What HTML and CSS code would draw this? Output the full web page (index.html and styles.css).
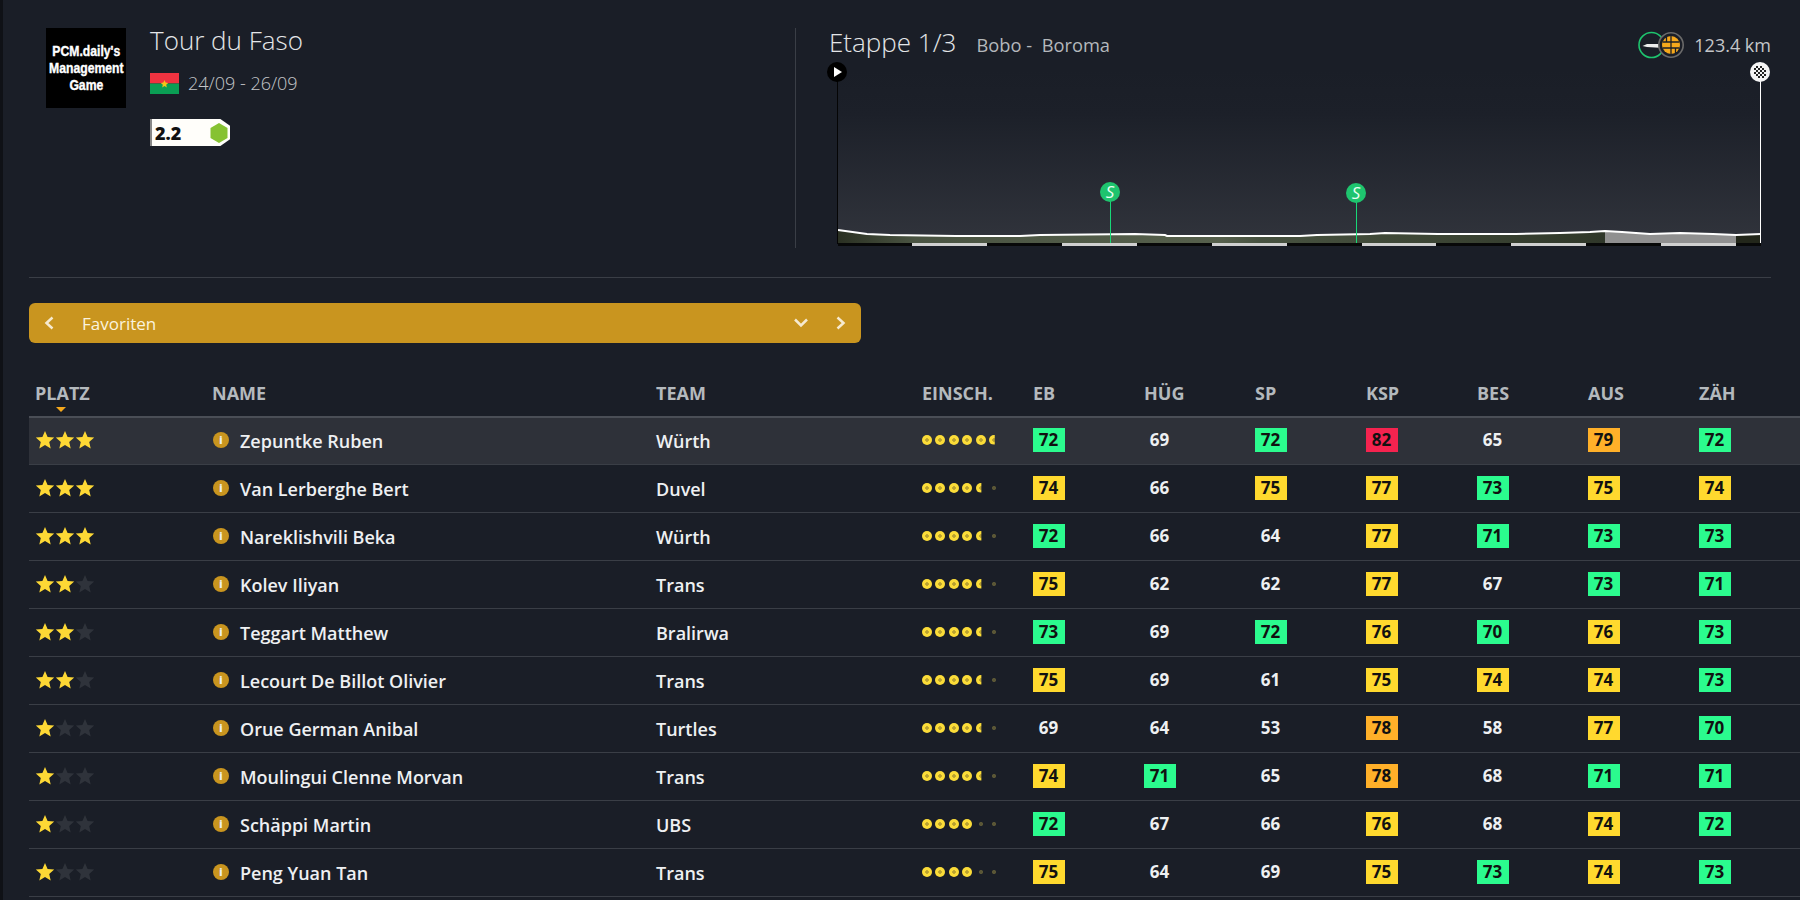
FILE: index.html
```html
<!DOCTYPE html>
<html lang="de">
  <head>
    <meta charset="UTF-8" />
    <title>Tour du Faso</title>
    <link rel="stylesheet" href="styles.css">
  </head>
  <body>
    <svg class="defs" width="0" height="0">
      <symbol id="star" viewBox="0 0 20 20"><polygon points="10,1 12.6,7 19.2,7.6 14.2,12 15.7,18.5 10,15.1 4.3,18.5 5.8,12 0.8,7.6 7.4,7" /></symbol>
    </svg>
    <div class="head">
      <div class="race">
        <div class="logo"><span class="logo-text">PCM.daily's<br>Management<br>Game</span></div>
        <div class="race-info">
          <h1 class="race-title">Tour du Faso</h1>
          <div class="race-date">
            <svg class="flag" width="29" height="21" viewBox="0 0 29 21">
              <rect width="29" height="10.5" fill="#ef3340" />
              <rect y="10.5" width="29" height="10.5" fill="#0a9e54" />
              <polygon points="14.5,7 15.6,9.6 18.2,10 16.2,11.8 16.8,14.4 14.5,13 12.2,14.4 12.8,11.8 10.8,10 13.4,9.6" fill="#f5c518" />
            </svg>
            <span>24/09 - 26/09</span>
          </div>
          <div class="cat">
            <span class="cat-num">2.2</span>
            <svg width="20" height="20" viewBox="0 0 20 20"><polygon points="10,0 18.5,5 18.5,15 10,20 1.5,15 1.5,5" fill="#86c232" /></svg>
          </div>
        </div>
      </div>
      <div class="stage">
        <div class="stage-top">
          <div class="stage-name">
            <span class="stage-num">Etappe 1/3</span>
            <span class="stage-route">Bobo -&nbsp; Boroma</span>
          </div>
          <div class="stage-len">
            <svg width="46" height="28" viewBox="0 0 46 28">
              <circle cx="13.5" cy="14" r="12.5" fill="none" stroke="#1ec46e" stroke-width="1.6" />
              <path d="M4.5 15 L9 13 H25 V17 L9 16 Z" fill="#eee" />
              <circle cx="33" cy="14" r="12.2" fill="#1a1e27" stroke="#6a6a6a" stroke-width="1.6" />
              <circle cx="33" cy="14" r="9" fill="#f5a81c" />
              <path d="M33 5 V23 M24.5 11 H41.5 M24.5 17 H41.5 M28.5 5.5 V11 M37.5 17 V22.5" stroke="#1a1e27" stroke-width="1.3" />
            </svg>
            <span>123.4 km</span>
          </div>
        </div>
        <svg class="profile" width="944" height="190" viewBox="826 60 944 190">
          <defs>
            <linearGradient id="sky" x1="0" y1="0" x2="0" y2="1">
              <stop offset="0" stop-color="#1a1e27" />
              <stop offset="0.25" stop-color="#1c2029" />
              <stop offset="1" stop-color="#31343c" />
            </linearGradient>
            <linearGradient id="land" x1="0" y1="0" x2="1" y2="0">
              <stop offset="0" stop-color="#2a3022" />
              <stop offset="0.1" stop-color="#4a5442" />
              <stop offset="0.5" stop-color="#56604c" />
              <stop offset="0.55" stop-color="#475240" />
              <stop offset="0.75" stop-color="#3e4736" />
              <stop offset="1" stop-color="#2f3729" />
            </linearGradient>
          </defs>
          <rect x="838" y="70" width="923" height="175" fill="url(#sky)" />
          <polygon fill="url(#land)" points="838,230 867,234 890,235 956,236 1020,236 1040,235 1135,234 1165,235 1167,236 1300,236 1317,235 1370,234 1385,233 1438,234 1516,234 1560,233 1590,232 1605,231 1605,243 838,243" />
          <polygon fill="#909090" points="1605,231 1622,232 1650,234 1680,233 1713,234 1736,235 1736,243 1605,243" />
          <polygon fill="#22261a" points="1736,235 1761,234 1761,243 1736,243" />
          <polyline class="ridge" points="838,230 867,234 890,235 956,236 1020,236 1040,235 1135,234 1165,235 1167,236 1300,236 1317,235 1370,234 1385,233 1438,234 1516,234 1560,233 1590,232 1605,231 1622,232 1650,234 1680,233 1713,234 1736,235 1761,234" />
          <rect x="838" y="243" width="923" height="3" fill="#070808" />
          <path class="km" d="M912 244.5H987M1062 244.5H1137M1212 244.5H1287M1362 244.5H1436M1511 244.5H1586M1661 244.5H1736" />
          <line x1="837.5" y1="72" x2="837.5" y2="244" stroke="#050505" />
          <circle cx="837" cy="72" r="10" fill="#000" />
          <polygon points="834,67 842,72 834,77" fill="#fff" />
          <line x1="1760.5" y1="72" x2="1760.5" y2="243" stroke="#fff" />
          <circle cx="1760" cy="72" r="10" fill="#f4f4f4" />
          <g fill="#222">
            <rect x="1756" y="66" width="2" height="2" /><rect x="1760" y="66" width="2" height="2" />
            <rect x="1754" y="68" width="2" height="2" /><rect x="1758" y="68" width="2" height="2" /><rect x="1762" y="68" width="2" height="2" />
            <rect x="1756" y="70" width="2" height="2" /><rect x="1760" y="70" width="2" height="2" /><rect x="1764" y="70" width="2" height="2" />
            <rect x="1754" y="72" width="2" height="2" /><rect x="1758" y="72" width="2" height="2" /><rect x="1762" y="72" width="2" height="2" />
            <rect x="1756" y="74" width="2" height="2" /><rect x="1760" y="74" width="2" height="2" /><rect x="1764" y="74" width="2" height="2" />
            <rect x="1758" y="76" width="2" height="2" /><rect x="1762" y="76" width="2" height="2" />
          </g>
          <line x1="1110.5" y1="192" x2="1110.5" y2="243" stroke="#18d878" />
          <circle cx="1110" cy="192" r="10" fill="#1ec46e" />
          <text class="pin-text" x="1110" y="198">S</text>
          <line x1="1356.5" y1="193" x2="1356.5" y2="243" stroke="#18d878" />
          <circle cx="1356" cy="193" r="10" fill="#1ec46e" />
          <text class="pin-text" x="1356" y="199">S</text>
        </svg>
      </div>
    </div>

    <div class="filter">
      <svg class="chev" width="12" height="14" viewBox="0 0 12 14"><path d="M9.5 1.5 L3.5 7 L9.5 12.5" /></svg>
      <span class="filter-name">Favoriten</span>
      <svg class="chev chev-down" width="14" height="12" viewBox="0 0 14 12"><path d="M1 2.5 L7 8.5 L13 2.5" /></svg>
      <svg class="chev chev-next" width="12" height="14" viewBox="0 0 12 14"><path d="M2.5 1.5 L8.5 7 L2.5 12.5" /></svg>
    </div>

    <div class="list">
      <div class="row list-head">
        <div class="sorted">Platz</div><div>Name</div><div>Team</div><div>Einsch.</div>
        <div>EB</div><div>Hüg</div><div>SP</div><div>KSP</div><div>Bes</div><div>Aus</div><div>Zäh</div>
      </div>

      <div class="row active">
        <div class="stars"><svg class="on"><use href="#star" /></svg><svg class="on"><use href="#star" /></svg><svg class="on"><use href="#star" /></svg></div>
        <div class="name"><span class="info">i</span>Zepuntke Ruben</div>
        <div class="team">Würth</div>
        <div class="dots"><i></i><i></i><i></i><i></i><i></i><i class="half"></i></div>
        <div><b class="val g">72</b></div><div><b class="val">69</b></div><div><b class="val g">72</b></div><div><b class="val r">82</b></div><div><b class="val">65</b></div><div><b class="val o">79</b></div><div><b class="val g">72</b></div>
      </div>
      <div class="row">
        <div class="stars"><svg class="on"><use href="#star" /></svg><svg class="on"><use href="#star" /></svg><svg class="on"><use href="#star" /></svg></div>
        <div class="name"><span class="info">i</span>Van Lerberghe Bert</div>
        <div class="team">Duvel</div>
        <div class="dots"><i></i><i></i><i></i><i></i><i class="half"></i><i class="off"></i></div>
        <div><b class="val y">74</b></div><div><b class="val">66</b></div><div><b class="val y">75</b></div><div><b class="val y">77</b></div><div><b class="val g">73</b></div><div><b class="val y">75</b></div><div><b class="val y">74</b></div>
      </div>
      <div class="row">
        <div class="stars"><svg class="on"><use href="#star" /></svg><svg class="on"><use href="#star" /></svg><svg class="on"><use href="#star" /></svg></div>
        <div class="name"><span class="info">i</span>Nareklishvili Beka</div>
        <div class="team">Würth</div>
        <div class="dots"><i></i><i></i><i></i><i></i><i class="half"></i><i class="off"></i></div>
        <div><b class="val g">72</b></div><div><b class="val">66</b></div><div><b class="val">64</b></div><div><b class="val y">77</b></div><div><b class="val g">71</b></div><div><b class="val g">73</b></div><div><b class="val g">73</b></div>
      </div>
      <div class="row">
        <div class="stars"><svg class="on"><use href="#star" /></svg><svg class="on"><use href="#star" /></svg><svg><use href="#star" /></svg></div>
        <div class="name"><span class="info">i</span>Kolev Iliyan</div>
        <div class="team">Trans</div>
        <div class="dots"><i></i><i></i><i></i><i></i><i class="half"></i><i class="off"></i></div>
        <div><b class="val y">75</b></div><div><b class="val">62</b></div><div><b class="val">62</b></div><div><b class="val y">77</b></div><div><b class="val">67</b></div><div><b class="val g">73</b></div><div><b class="val g">71</b></div>
      </div>
      <div class="row">
        <div class="stars"><svg class="on"><use href="#star" /></svg><svg class="on"><use href="#star" /></svg><svg><use href="#star" /></svg></div>
        <div class="name"><span class="info">i</span>Teggart Matthew</div>
        <div class="team">Bralirwa</div>
        <div class="dots"><i></i><i></i><i></i><i></i><i class="half"></i><i class="off"></i></div>
        <div><b class="val g">73</b></div><div><b class="val">69</b></div><div><b class="val g">72</b></div><div><b class="val y">76</b></div><div><b class="val g">70</b></div><div><b class="val y">76</b></div><div><b class="val g">73</b></div>
      </div>
      <div class="row">
        <div class="stars"><svg class="on"><use href="#star" /></svg><svg class="on"><use href="#star" /></svg><svg><use href="#star" /></svg></div>
        <div class="name"><span class="info">i</span>Lecourt De Billot Olivier</div>
        <div class="team">Trans</div>
        <div class="dots"><i></i><i></i><i></i><i></i><i class="half"></i><i class="off"></i></div>
        <div><b class="val y">75</b></div><div><b class="val">69</b></div><div><b class="val">61</b></div><div><b class="val y">75</b></div><div><b class="val y">74</b></div><div><b class="val y">74</b></div><div><b class="val g">73</b></div>
      </div>
      <div class="row">
        <div class="stars"><svg class="on"><use href="#star" /></svg><svg><use href="#star" /></svg><svg><use href="#star" /></svg></div>
        <div class="name"><span class="info">i</span>Orue German Anibal</div>
        <div class="team">Turtles</div>
        <div class="dots"><i></i><i></i><i></i><i></i><i class="half"></i><i class="off"></i></div>
        <div><b class="val">69</b></div><div><b class="val">64</b></div><div><b class="val">53</b></div><div><b class="val o">78</b></div><div><b class="val">58</b></div><div><b class="val y">77</b></div><div><b class="val g">70</b></div>
      </div>
      <div class="row">
        <div class="stars"><svg class="on"><use href="#star" /></svg><svg><use href="#star" /></svg><svg><use href="#star" /></svg></div>
        <div class="name"><span class="info">i</span>Moulingui Clenne Morvan</div>
        <div class="team">Trans</div>
        <div class="dots"><i></i><i></i><i></i><i></i><i class="half"></i><i class="off"></i></div>
        <div><b class="val y">74</b></div><div><b class="val g">71</b></div><div><b class="val">65</b></div><div><b class="val o">78</b></div><div><b class="val">68</b></div><div><b class="val g">71</b></div><div><b class="val g">71</b></div>
      </div>
      <div class="row">
        <div class="stars"><svg class="on"><use href="#star" /></svg><svg><use href="#star" /></svg><svg><use href="#star" /></svg></div>
        <div class="name"><span class="info">i</span>Schäppi Martin</div>
        <div class="team">UBS</div>
        <div class="dots"><i></i><i></i><i></i><i></i><i class="off"></i><i class="off"></i></div>
        <div><b class="val g">72</b></div><div><b class="val">67</b></div><div><b class="val">66</b></div><div><b class="val y">76</b></div><div><b class="val">68</b></div><div><b class="val y">74</b></div><div><b class="val g">72</b></div>
      </div>
      <div class="row">
        <div class="stars"><svg class="on"><use href="#star" /></svg><svg><use href="#star" /></svg><svg><use href="#star" /></svg></div>
        <div class="name"><span class="info">i</span>Peng Yuan Tan</div>
        <div class="team">Trans</div>
        <div class="dots"><i></i><i></i><i></i><i></i><i class="off"></i><i class="off"></i></div>
        <div><b class="val y">75</b></div><div><b class="val">64</b></div><div><b class="val">69</b></div><div><b class="val y">75</b></div><div><b class="val g">73</b></div><div><b class="val y">74</b></div><div><b class="val g">73</b></div>
      </div>
    </div>
  </body>
</html>
```

FILE: styles.css
```css
html,
body {
  height: 100%;
  overflow: hidden;
}

body {
  margin: 0;
  padding-left: 29px;
  background-color: #1a1e27;
  background-image: linear-gradient(#0f1116, #0f1116);
  background-size: 3px 100%;
  background-repeat: no-repeat;
  color: #fff;
  font-family: "Open Sans", "Liberation Sans", sans-serif;
}

.defs {
  position: absolute;
}

.head {
  display: flex;
  width: 1742px;
  height: 252px;
  padding-top: 25px;
  border-bottom: 1px solid #3a3e46;
}

.race {
  display: flex;
  flex: none;
  box-sizing: border-box;
  width: 767px;
  height: 220px;
  margin-top: 3px;
  padding-left: 17px;
  border-right: 1px solid #3a3e46;
}

.logo {
  display: flex;
  align-items: center;
  justify-content: center;
  width: 80px;
  height: 80px;
  background: #000;
}

.logo-text {
  display: block;
  flex: none;
  font-family: "Liberation Sans", sans-serif;
  font-size: 14.5px;
  font-weight: 700;
  line-height: 17px;
  text-align: center;
  -webkit-text-stroke: 0.4px #fff;
  transform: scaleX(0.84);
}

.race-info {
  margin-left: 24px;
}

.race-title {
  margin: -6px 0 0;
  font-size: 26px;
  font-weight: 300;
  line-height: 36px;
  color: #e4e6e8;
}

.race-date {
  display: flex;
  align-items: center;
  gap: 9px;
  height: 24px;
  margin-top: 13px;
  font-size: 18px;
  font-weight: 300;
  color: #c4c6c9;
}

.cat {
  display: flex;
  align-items: center;
  justify-content: space-between;
  box-sizing: border-box;
  width: 80px;
  height: 27px;
  margin-top: 24px;
  padding: 0 1px 0 3px;
  background: #fffefa;
  border-left: 2px solid #888;
  clip-path: polygon(0 0, 88% 0, 100% 25%, 100% 75%, 88% 100%, 0 100%);
}

.cat-num {
  font-size: 18px;
  font-weight: 800;
  color: #111;
}

.stage {
  flex: 1;
  padding-left: 33px;
}

.stage-top {
  display: flex;
  align-items: center;
  justify-content: space-between;
  height: 35px;
}

.stage-name {
  margin-top: -2px;
}

.stage-num {
  font-size: 26px;
  font-weight: 300;
  color: #e4e6e8;
}

.stage-route {
  margin-left: 16px;
  font-size: 18.3px;
  color: #b4b8bc;
}

.stage-len {
  display: flex;
  align-items: center;
  gap: 10px;
  margin-top: 5px;
  font-size: 18px;
  color: #c4c6c9;
}

.profile {
  display: block;
  margin-left: -3px;
}

.ridge {
  fill: none;
  stroke: #fff;
  stroke-width: 2;
}

.km {
  stroke: #d0d0d0;
  stroke-width: 3;
}

.pin-text {
  fill: #e8fff2;
  font-size: 17px;
  font-style: italic;
  text-anchor: middle;
}

.filter {
  display: flex;
  align-items: center;
  box-sizing: border-box;
  width: 832px;
  height: 40px;
  margin-top: 25px;
  padding: 0 14px;
  background: #c9951f;
  border-radius: 6px;
  font-size: 17px;
}

.filter-name {
  flex: 1;
  margin-left: 27px;
  color: #fbf3de;
}

.chev {
  flex: none;
  fill: none;
  stroke: #f6ead0;
  stroke-width: 2.5;
}

.chev-next {
  margin-left: 27px;
}

.row {
  display: grid;
  grid-template-columns: 177px 444px 266px repeat(8, 111px);
  align-items: center;
  box-sizing: border-box;
  width: 1771px;
  height: 48px;
  padding-left: 6px;
  border-bottom: 1px solid #3a3e46;
  font-size: 18px;
  font-weight: 600;
  color: #eef0f2;
}

.list-head {
  align-items: end;
  height: 75px;
  padding-bottom: 11px;
  border-bottom: 2px solid #4a4e56;
  font-weight: 700;
  text-transform: uppercase;
  color: #b4b9bd;
}

.sorted {
  position: relative;
}

.sorted::after {
  content: "";
  position: absolute;
  left: 21px;
  bottom: -7px;
  border: 5px solid transparent;
  border-top-color: #f5a81c;
  border-bottom: 0;
}

.row.active {
  height: 47px;
  padding-bottom: 1px;
  background: #2e3139;
}

.stars {
  display: flex;
  margin-top: -2px;
}

.stars svg {
  width: 20px;
  height: 20px;
  fill: #2f333b;
}

.stars svg.on {
  fill: #fdd835;
}

.name {
  display: flex;
  align-items: center;
  margin-left: 1px;
}

.info {
  display: flex;
  align-items: center;
  justify-content: center;
  width: 16px;
  height: 16px;
  margin: -2px 11px 0 0;
  background: #c9951f;
  border-radius: 50%;
  font-size: 10px;
  font-weight: 800;
  line-height: 1;
}

.dots {
  display: flex;
  align-items: center;
  gap: 3.4px;
  margin-top: -2px;
}

.dots i {
  display: block;
  width: 10px;
  height: 10px;
  border-radius: 50%;
  background: radial-gradient(circle, #b8a030 0 1.5px, #fbdc38 2px);
}

.dots i.half {
  clip-path: inset(0 42% 0 0);
}

.dots i.off {
  background: radial-gradient(circle, #5a5636 0 1.8px, transparent 2.3px);
}

.val {
  display: block;
  box-sizing: border-box;
  width: 32px;
  height: 24px;
  margin-top: -2px;
  padding-right: 1px;
  font-size: 17px;
  font-weight: 700;
  line-height: 24px;
  text-align: center;
}

.val.g {
  background: #2bfb8e;
  color: #111;
}

.val.y {
  background: #ffd92e;
  color: #111;
}

.val.o {
  background: #ffb029;
  color: #111;
}

.val.r {
  background: #f5234f;
  color: #111;
}
```
